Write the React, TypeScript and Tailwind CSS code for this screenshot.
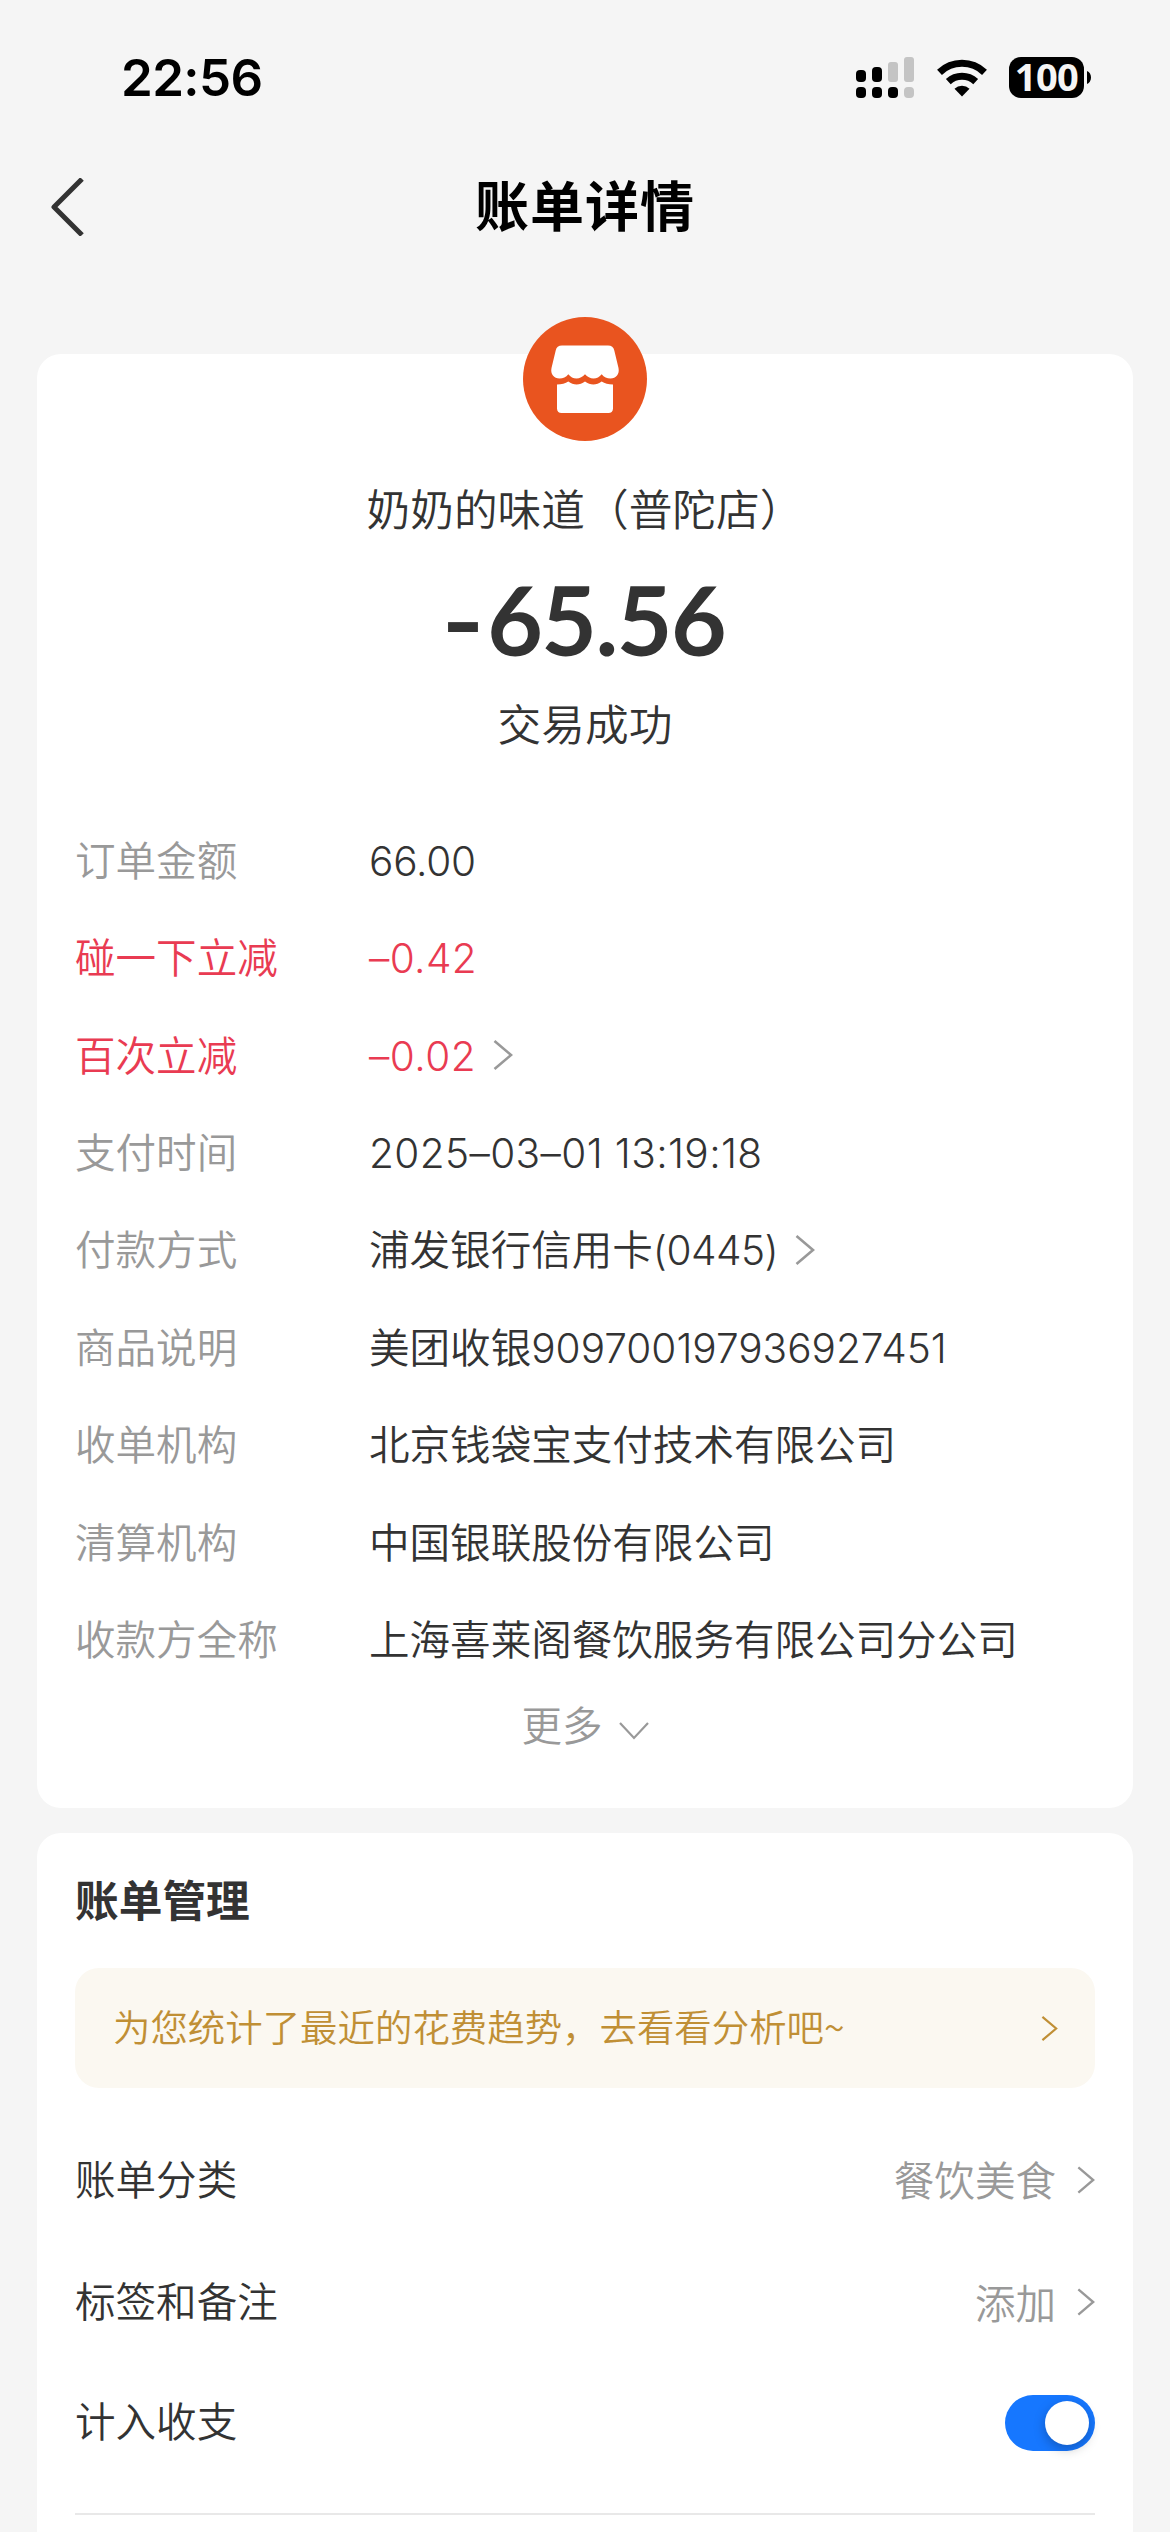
import { useState } from "react";
import { clsx } from "clsx";

type Detail = {
  label: string;
  value?: string;
  number?: string;
  numberClass?: string;
  discount?: boolean;
  link?: boolean;
};

const details: Detail[] = [
  { label: "订单金额", number: "66.00", numberClass: "tracking-[-0.2px]" },
  {
    label: "碰一下立减",
    number: "–0.42",
    numberClass: "tracking-[0.4px]",
    discount: true,
  },
  {
    label: "百次立减",
    number: "–0.02",
    numberClass: "tracking-[0.5px]",
    discount: true,
    link: true,
  },
  {
    label: "支付时间",
    number: "2025–03–01 13:19:18",
    numberClass: "tracking-[0.4px]",
  },
  {
    label: "付款方式",
    value: "浦发银行信用卡",
    number: "(0445)",
    numberClass: "tracking-[-0.5px]",
    link: true,
  },
  { label: "商品说明", value: "美团收银", number: "909700197936927451" },
  { label: "收单机构", value: "北京钱袋宝支付技术有限公司" },
  { label: "清算机构", value: "中国银联股份有限公司" },
  { label: "收款方全称", value: "上海喜莱阁餐饮服务有限公司分公司" },
];

function ChevronRight({ className }: { className?: string }) {
  return (
    <svg
      viewBox="0 0 20 30"
      fill="none"
      stroke="currentColor"
      strokeWidth="2.6"
      className={clsx("shrink-0", className)}
    >
      <path d="M1.500 1 18 15 1.500 29" />
    </svg>
  );
}

function StatusBar() {
  return (
    <div className="flex h-[155px] items-center justify-between pr-[79px] pl-[121px]">
      <span className="pt-[2px] text-[51px] font-semibold tracking-[-0.6px] text-black">
        22:56
      </span>
      <div className="flex items-center">
        {/* Dual SIM signal */}
        <svg viewBox="0 0 58 41" className="h-[41px] w-[58px]">
          <g fill="#000">
            <rect x="0" y="13" width="10" height="12" rx="4" />
            <rect x="16" y="10" width="10" height="15" rx="4" />
            <rect x="0" y="30" width="10" height="11" rx="4" />
            <rect x="16" y="30" width="10" height="11" rx="4" />
            <rect x="32" y="30" width="10" height="11" rx="4" />
          </g>
          <g fill="#c4c4c4">
            <rect x="32" y="5" width="10" height="20" rx="3" />
            <rect x="48" y="0" width="10" height="25" rx="3" />
            <rect x="48" y="30" width="10" height="11" rx="4" />
          </g>
        </svg>
        {/* Wi-Fi */}
        <svg viewBox="0 0 50 38" className="ml-[23px] h-[38px] w-[50px]">
          <g fill="none" stroke="#000" strokeWidth="7">
            <path d="M2.5 13.4a32.5 32.5 0 0 1 45 0" />
            <path d="M11.3 22.6a20 20 0 0 1 27.4 0" />
          </g>
          <path d="M17.5 29.8a11 11 0 0 1 15 0L25 37.5z" fill="#000" />
        </svg>
        {/* Battery */}
        <div className="ml-[22px] flex h-[41px] w-[75px] items-center justify-center rounded-[12px] bg-black pb-[4px] font-['Open_Sans'] text-[38px] leading-none font-bold tracking-[-0.6px] text-[#f5f5f5]">
          100
        </div>
        <svg viewBox="0 0 4 13" className="ml-[3px] h-[13px] w-[4px]">
          <path d="M0 0c2.6 1.2 4 3.600 4 6.500S2.600 11.800 0 13z" fill="#000" />
        </svg>
      </div>
    </div>
  );
}

function ShopIcon() {
  return (
    <svg viewBox="0 0 124 124" className="size-[124px]">
      <circle cx="62" cy="62" r="62" fill="#e9541f" />
      <g fill="#fff">
        <path d="M39 28.500h46c3.500 0 5.600 1.800 6.300 5l4.200 17.500c1.300 6-2.500 10.500-8 10.500-3.600 0-6.500-1.200-8.800-4.200-2.200 2.800-5 4.200-8.200 4.200S64.200 60 62 57.300c-2.200 2.700-5.300 4.200-8.500 4.200s-6-1.400-8.200-4.200c-2.300 3-5.200 4.200-8.800 4.200-5.500 0-9.300-4.500-8-10.500L32.700 33.500c.7-3.200 2.800-5 6.300-5z" />
        <path d="M34 67.500c4.500 0 8.500-1 11.300-3 5.200 4 11.500 4 16.700 0 5.200 4 11.500 4 16.700 0 2.800 2 6.800 3 11.300 3V91.500c0 3-2 4.500-4.500 4.500h-47c-2.500 0-4.500-1.500-4.500-4.500z" />
      </g>
    </svg>
  );
}

function DetailRow({
  label,
  value,
  number,
  numberClass,
  discount,
  link,
}: Detail) {
  return (
    <div
      className={clsx(
        "flex h-[97.4px] items-center",
        discount ? "text-[#e93b52]" : "text-[#333]"
      )}
    >
      <span className={clsx("w-[294px] pt-[3px]", !discount && "text-[#999]")}>
        {label}
      </span>
      <span className="pt-[3px]">
        {value}
        <span className={numberClass}>{number}</span>
      </span>
      {link && (
        <ChevronRight className="ml-[17px] h-[30px] w-[20px] text-[#999]" />
      )}
    </div>
  );
}

export default function App() {
  const [counted, setCounted] = useState(true);

  return (
    <div
      lang="zh-CN"
      className="flex h-[2532px] w-[1170px] flex-col overflow-hidden bg-[#f5f5f5] font-['Inter','Noto_Sans_CJK_SC',sans-serif] text-[40.56px] font-[350] whitespace-nowrap text-[#333]"
    >
      <StatusBar />

      {/* Title bar */}
      <header className="flex h-[104px] items-center px-[50px] text-black">
        <svg
          viewBox="0 0 35 58"
          fill="none"
          stroke="#333"
          strokeWidth="5"
          className="h-[58px] w-[35px]"
        >
          <path d="M32 1 4 29 32 57" strokeLinejoin="round" />
        </svg>
        <h1 className="flex-1 pt-[1px] pr-[35px] text-center text-[54px] font-bold tracking-[1px]">
          账单详情
        </h1>
      </header>

      {/* Bill */}
      <section className="mx-[37px] mt-[95px] flex h-[1454px] shrink-0 flex-col rounded-[24px] bg-white px-[38px]">
        <div className="-mt-[37px] flex flex-col items-center">
          <ShopIcon />
          <p className="mt-[40px] text-[43.7px] leading-[60px]">
            奶奶的味道（普陀店）
          </p>
          <p className="mt-[28px] font-['Lato'] text-[96px] leading-[100px] font-bold tracking-[-1.5px]">
            <span className="mr-[8px] inline-block scale-x-120">-</span>65.56
          </p>
          <p className="mt-[27px] text-[43.7px] leading-[60px]">交易成功</p>
        </div>

        <div className="mt-[56px]">
          {details.map((detail) => (
            <DetailRow key={detail.label} {...detail} />
          ))}
        </div>

        <button className="flex h-[76px] items-center justify-center pt-[1px] text-[#999]">
          更多
          <svg
            viewBox="0 0 30 18"
            fill="none"
            stroke="currentColor"
            strokeWidth="2.2"
            className="mt-[8px] ml-[16px] h-[18px] w-[30px]"
          >
            <path d="M1 1 15 16 29 1" />
          </svg>
        </button>
      </section>

      {/* Bill management */}
      <section className="mx-[37px] mt-[25px] flex-1 rounded-t-[24px] bg-white px-[38px] pt-[39px]">
        <h2 className="text-[43.7px] leading-[60px] font-bold">账单管理</h2>
        <div className="mt-[36px] flex h-[120px] items-center justify-between rounded-[24px] bg-[#fbf8f1] pr-[37px] pl-[38px] text-[37.44px] text-[#c08f35]">
          <span className="pb-[3px] font-['Noto_Sans_CJK_SC',sans-serif]">
            为您统计了最近的花费趋势，去看看分析吧~
          </span>
          <ChevronRight className="h-[25px] w-[17px]" />
        </div>

        <div className="mt-[31px] flex h-[122px] items-center justify-between">
          <span className="pt-[2px]">账单分类</span>
          <span className="flex items-center text-[#999]">
            <span className="pt-[4px]">餐饮美食</span>
            <ChevronRight className="ml-[21px] h-[30px] w-[18px]" />
          </span>
        </div>
        <div className="flex h-[122px] items-center justify-between">
          <span className="pt-[2px]">标签和备注</span>
          <span className="flex items-center text-[#999]">
            <span className="pt-[6px]">添加</span>
            <ChevronRight className="ml-[21px] h-[30px] w-[18px]" />
          </span>
        </div>
        <div className="flex h-[120px] items-center justify-between">
          <span className="pt-[1px]">计入收支</span>
          <button
            role="switch"
            aria-checked={counted}
            onClick={() => setCounted(!counted)}
            className={clsx(
              "flex h-[56px] w-[90px] items-center rounded-full px-[6px]",
              counted ? "justify-end bg-[#1677ff]" : "justify-start bg-[#ccc]"
            )}
          >
            <span className="size-[44px] rounded-full bg-white shadow-[0_4px_12px_rgba(0,0,0,0.25)]" />
          </button>
        </div>
        <div className="mt-[30px] border-t-2 border-[#e8e8e8]" />
      </section>
    </div>
  );
}
